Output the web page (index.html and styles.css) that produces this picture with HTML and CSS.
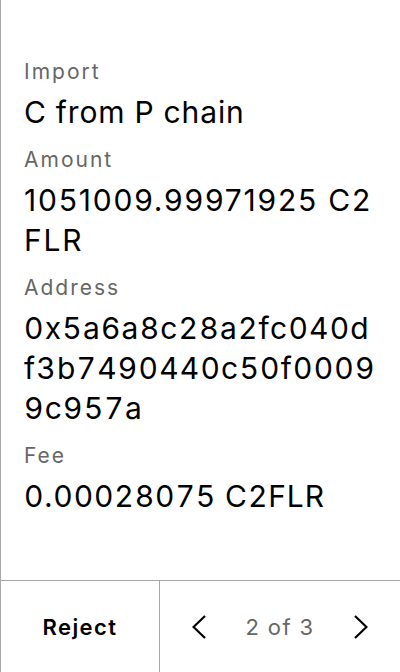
FILE: index.html
```html
<!DOCTYPE html>
<html>
<head>
<meta charset="utf-8">
<link rel="stylesheet" href="styles.css">
</head>
<body>
<div class="screen">
  <div class="content">
    <div class="field">
      <div class="label">Import</div>
      <div class="value">C from P chain</div>
    </div>
    <div class="field">
      <div class="label">Amount</div>
      <div class="value value-amount">1051009.99971925 C2<br>FLR</div>
    </div>
    <div class="field">
      <div class="label">Address</div>
      <div class="value value-address">0x5a6a8c28a2fc040d<br>f3b7490440c50f0009<br>9c957a</div>
    </div>
    <div class="field">
      <div class="label">Fee</div>
      <div class="value">0.00028075 C2FLR</div>
    </div>
  </div>
  <div class="footer">
    <div class="reject">Reject</div>
    <div class="pager">
      <svg class="chev" width="14" height="24" viewBox="0 0 14 24"><path d="M13 1 L1.5 12 L13 23" fill="none" stroke="#000" stroke-width="2.2"/></svg>
      <span class="count">2 of 3</span>
      <svg class="chev" width="14" height="24" viewBox="0 0 14 24"><path d="M1 1 L12.5 12 L1 23" fill="none" stroke="#000" stroke-width="2.2"/></svg>
    </div>
  </div>
</div>
</body>
</html>
```
FILE: styles.css
```css
* { box-sizing: border-box; }
html, body { margin: 0; padding: 0; background: #fff; }
body { font-family: Inter, "Noto Sans", sans-serif; color: #000; }
.screen {
  width: 400px;
  height: 672px;
  border-left: 1px solid #a8a8a8;
  display: flex;
  flex-direction: column;
}
.content {
  flex: 1;
  padding: 58px 4px 0 23px;
  display: flex;
  flex-direction: column;
  gap: 14px;
}
.label {
  font-size: 21px;
  line-height: 28px;
  letter-spacing: 2px;
  color: #666;
  margin-bottom: 6px;
}
.value {
  font-size: 30px;
  line-height: 40px;
  letter-spacing: 0.9px;
  font-variant-numeric: tabular-nums;
  white-space: nowrap;
  color: #000;
}
.value-amount {
  font-variant-numeric: normal;
  letter-spacing: 1.8px;
}
.value-address {
  letter-spacing: 1.2px;
}
.footer {
  height: 92px;
  border-top: 1px solid #a8a8a8;
  display: flex;
}
.reject {
  width: 159px;
  border-right: 1px solid #a8a8a8;
  display: flex;
  align-items: center;
  justify-content: center;
  font-size: 22px;
  font-weight: 600;
  letter-spacing: 1.4px;
}
.pager {
  flex: 1;
  display: flex;
  align-items: center;
  justify-content: space-between;
  padding: 0 32px 0 32px;
}
.count {
  font-size: 22px;
  letter-spacing: 1.4px;
  color: #666;
}
.chev { display: block; }
```
